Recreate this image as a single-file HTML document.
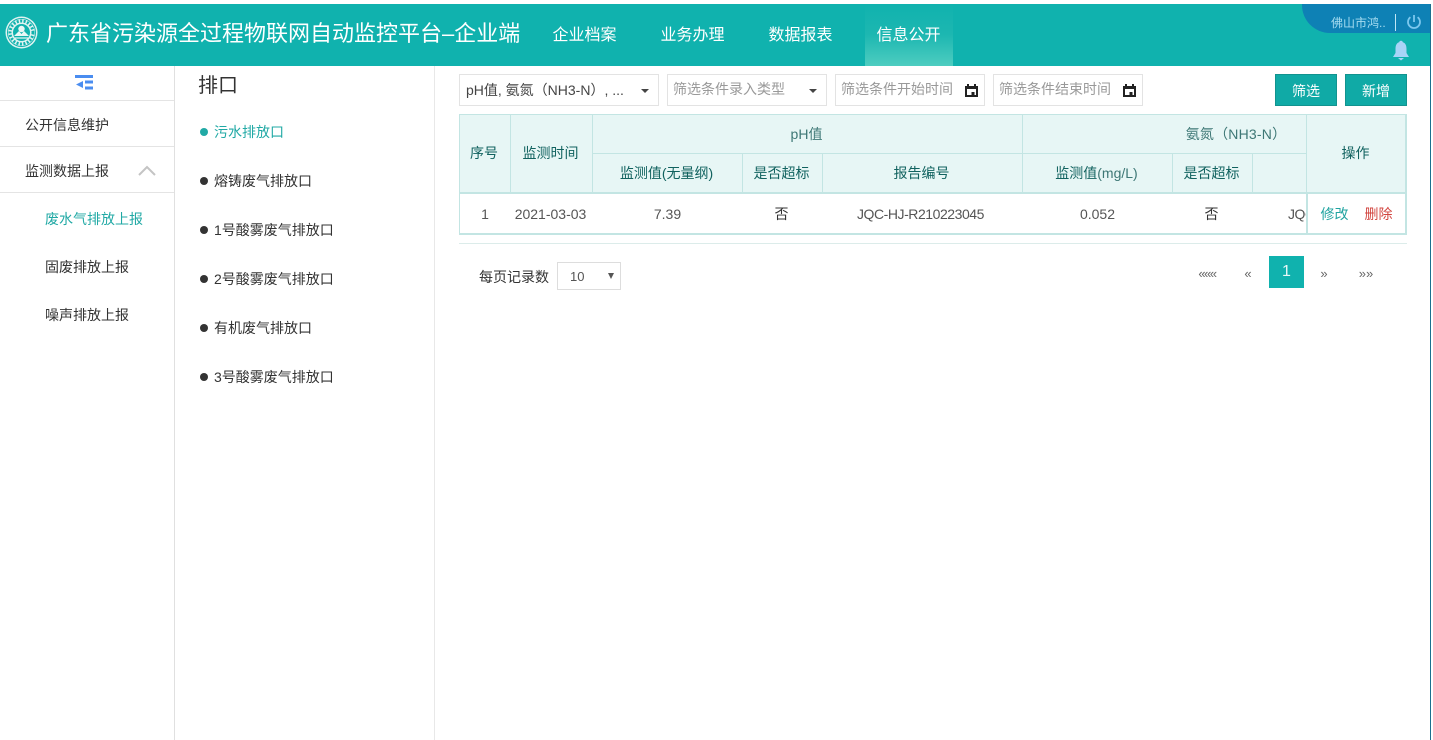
<!DOCTYPE html>
<html lang="zh">
<head>
<meta charset="utf-8">
<style>
html,body{margin:0;padding:0;width:1433px;height:740px;overflow:hidden;background:#fff;}
body{font-family:"Liberation Sans","Noto Sans CJK SC",sans-serif;font-size:14px;color:#333;position:relative;}
.a{position:absolute;white-space:nowrap;}
.hline{position:absolute;height:1px;background:#e4e4e4;}
.nav{position:absolute;top:5px;height:62px;line-height:61px;color:#fff;font-size:16px;text-align:center;}
.box{position:absolute;top:74px;height:30px;border:1px solid #e3e3e3;box-sizing:border-box;line-height:29px;padding-left:5px;font-size:14px;color:#999;white-space:nowrap;overflow:hidden;}
.caret{position:absolute;width:0;height:0;border-left:4px solid transparent;border-right:4px solid transparent;border-top:4px solid #444;top:89px;}
.btn{position:absolute;top:74px;width:62px;height:32px;background:#10aaa6;border:1px solid #12938f;box-sizing:border-box;color:#fff;text-align:center;line-height:32px;font-size:14px;}
.th{position:absolute;color:#11625f;font-size:14px;text-align:center;white-space:nowrap;}
.td{position:absolute;top:194px;height:40px;line-height:40px;color:#555;font-size:14px;text-align:center;white-space:nowrap;}
.v{position:absolute;width:1px;background:#c3e5e3;}
.h{position:absolute;height:1px;background:#c3e5e3;}
.item{position:absolute;left:200px;font-size:14px;color:#333;white-space:nowrap;line-height:20px;}
.item i{display:inline-block;width:8px;height:8px;border-radius:50%;background:#333;margin-right:6px;vertical-align:1px;}
.pg{position:absolute;top:256px;height:32px;line-height:36px;font-size:13px;color:#666;text-align:center;}
</style>
</head>
<body>
<!-- Header -->
<div class="a" style="left:0;top:4px;width:1431px;height:62px;background:#10b2ae;"></div>
<div class="a" style="left:1430px;top:4px;width:1px;height:736px;background:#1b6f8f;"></div>
<svg class="a" style="left:4px;top:15px" width="35" height="35" viewBox="0 0 35 35">
  <circle cx="17.5" cy="17.5" r="16" fill="#dff3f1" />
  <circle cx="17.5" cy="17.5" r="14" fill="none" stroke="#10b2ae" stroke-width="1"/>
  <circle cx="17.5" cy="17.5" r="11.5" fill="none" stroke="#10b2ae" stroke-width="3" stroke-dasharray="2 1.5"/>
  <circle cx="17.5" cy="17.5" r="8.5" fill="#10b2ae"/>
  <circle cx="17.5" cy="14" r="3.2" fill="#e8f7f5"/>
  <path d="M10 21 L15 16 L17.5 19 L20 16 L25 21 Z" fill="#e8f7f5"/>
  <path d="M11 23 H24" stroke="#e8f7f5" stroke-width="1.2"/>
</svg>
<div class="a" style="left:46px;top:4px;line-height:60px;font-size:22px;color:#fff;letter-spacing:0;">广东省污染源全过程物联网自动监控平台–企业端</div>
<div class="a" style="left:865px;top:4px;width:88px;height:62px;background:linear-gradient(to bottom,#10b2ae 0%,#1db7b1 50%,#4ecdc0 100%);"></div>
<div class="nav" style="left:552px;width:65px;">企业档案</div>
<div class="nav" style="left:660px;width:65px;">业务办理</div>
<div class="nav" style="left:768px;width:65px;">数据报表</div>
<div class="nav" style="left:876px;width:65px;">信息公开</div>
<div class="a" style="left:1302px;top:4px;width:128px;height:29px;background:#0e81b5;border-bottom-left-radius:28px;"></div>
<div class="a" style="left:1331px;top:13px;line-height:20px;font-size:12px;color:#a6dcf0;">佛山市鸿..</div>
<div class="a" style="left:1395px;top:14px;width:1px;height:17px;background:#bfe6f5;"></div>
<svg class="a" style="left:1406px;top:14px" width="16" height="16" viewBox="0 0 16 16" fill="none" stroke="#7cc8ee" stroke-width="1.8">
  <path d="M4.4 3.2 A6 6 0 1 0 11.6 3.2"/><path d="M8 1V8"/>
</svg>
<svg class="a" style="left:1392px;top:40px" width="18" height="22" viewBox="0 0 18 22">
  <circle cx="9" cy="2.5" r="1.8" fill="#a9d4f7"/>
  <path d="M9 2 C4.5 2 3.5 5.5 3.5 9 V13 L1 17 H17 L14.5 13 V9 C14.5 5.5 13.5 2 9 2 Z" fill="#a9d4f7"/>
  <path d="M6 18 H12 L9 20.5 Z" fill="#a9d4f7"/>
</svg>

<!-- Left sidebar -->
<div class="a" style="left:174px;top:66px;width:1px;height:674px;background:#e0e0e0;"></div>
<div class="a" style="left:434px;top:66px;width:1px;height:674px;background:#e8e8e8;"></div>
<svg class="a" style="left:75px;top:75px" width="19" height="17" viewBox="0 0 19 17" fill="#4a8df0">
  <rect x="0" y="0" width="18" height="3"/>
  <path d="M1 9.5 L8 6 V13 Z"/>
  <rect x="10" y="5.5" width="8" height="3"/>
  <rect x="10" y="11.5" width="8" height="3"/>
</svg>
<div class="hline" style="left:0;top:100px;width:174px;"></div>
<div class="hline" style="left:0;top:146px;width:174px;"></div>
<div class="hline" style="left:0;top:192px;width:174px;"></div>
<div class="a" style="left:25px;top:115px;line-height:20px;font-size:14px;color:#333;">公开信息维护</div>
<div class="a" style="left:25px;top:161px;line-height:20px;font-size:14px;color:#333;">监测数据上报</div>
<svg class="a" style="left:138px;top:165px" width="18" height="11" viewBox="0 0 18 11" fill="none" stroke="#c4c4c4" stroke-width="2"><path d="M1 10 L9 2 L17 10"/></svg>
<div class="a" style="left:45px;top:209px;line-height:20px;font-size:14px;color:#21a9a5;">废水气排放上报</div>
<div class="a" style="left:45px;top:257px;line-height:20px;font-size:14px;color:#333;">固废排放上报</div>
<div class="a" style="left:45px;top:305px;line-height:20px;font-size:14px;color:#333;">噪声排放上报</div>

<!-- Middle column -->
<div class="a" style="left:198px;top:72px;line-height:28px;font-size:20px;color:#333;">排口</div>
<div class="item" style="top:122px;color:#21a9a5;"><i style="background:#21a9a5"></i>污水排放口</div>
<div class="item" style="top:171px;"><i></i>熔铸废气排放口</div>
<div class="item" style="top:220px;"><i></i>1号酸雾废气排放口</div>
<div class="item" style="top:269px;"><i></i>2号酸雾废气排放口</div>
<div class="item" style="top:318px;"><i></i>有机废气排放口</div>
<div class="item" style="top:367px;"><i></i>3号酸雾废气排放口</div>

<!-- Filters -->
<div class="box" style="left:459px;width:200px;height:32px;line-height:31px;color:#444;padding-left:6px;">pH值, 氨氮（NH3-N）, ...</div>
<div class="caret" style="left:641px;"></div>
<div class="box" style="left:667px;width:160px;height:32px;line-height:29px;">筛选条件录入类型</div>
<div class="caret" style="left:809px;"></div>
<div class="box" style="left:835px;width:150px;height:32px;line-height:29px;">筛选条件开始时间</div>
<svg class="a" style="left:965px;top:84px" width="13" height="13" viewBox="0 0 13 13"><path d="M0 2H13V13H0Z M2 5V11H11V5Z" fill="#222" fill-rule="evenodd"/><rect x="2" y="0" width="2" height="3" fill="#222"/><rect x="9" y="0" width="2" height="3" fill="#222"/><rect x="6.5" y="8" width="3" height="3" fill="#222"/></svg>
<div class="box" style="left:993px;width:150px;height:32px;line-height:29px;">筛选条件结束时间</div>
<svg class="a" style="left:1123px;top:84px" width="13" height="13" viewBox="0 0 13 13"><path d="M0 2H13V13H0Z M2 5V11H11V5Z" fill="#222" fill-rule="evenodd"/><rect x="2" y="0" width="2" height="3" fill="#222"/><rect x="9" y="0" width="2" height="3" fill="#222"/><rect x="6.5" y="8" width="3" height="3" fill="#222"/></svg>
<div class="btn" style="left:1275px;">筛选</div>
<div class="btn" style="left:1345px;">新增</div>

<!-- Table -->
<div class="a" style="left:459px;top:114px;width:948px;height:79px;background:#e7f6f5;"></div>
<div class="h" style="left:459px;top:114px;width:948px;"></div>
<div class="h" style="left:592px;top:153px;width:714px;"></div>
<div class="h" style="left:459px;top:192px;width:948px;height:2px;"></div>
<div class="h" style="left:459px;top:233px;width:948px;height:2px;"></div>
<div class="v" style="left:459px;top:114px;height:120px;"></div>
<div class="v" style="left:510px;top:114px;height:79px;"></div>
<div class="v" style="left:592px;top:114px;height:79px;"></div>
<div class="v" style="left:742px;top:153px;height:40px;"></div>
<div class="v" style="left:822px;top:153px;height:40px;"></div>
<div class="v" style="left:1022px;top:114px;height:79px;"></div>
<div class="v" style="left:1172px;top:153px;height:40px;"></div>
<div class="v" style="left:1252px;top:153px;height:40px;"></div>
<div class="v" style="left:1306px;top:114px;height:79px;"></div>
<div class="v" style="left:1306px;top:193px;height:41px;width:2px;"></div>
<div class="v" style="left:1405px;top:114px;height:120px;width:2px;"></div>

<div class="th" style="left:459px;width:50px;top:143px;line-height:20px;">序号</div>
<div class="th" style="left:510px;width:81px;top:143px;line-height:20px;">监测时间</div>
<div class="th" style="left:592px;width:429px;top:124px;line-height:20px;color:#3d7775;">pH值</div>
<div class="th" style="left:1023px;width:283px;top:124px;line-height:20px;padding-left:143px;box-sizing:border-box;color:#3d7775;letter-spacing:.2px;">氨氮（NH3-N）</div>
<div class="th" style="left:1307px;width:97px;top:143px;line-height:20px;">操作</div>
<div class="th" style="left:592px;width:149px;top:163px;line-height:20px;">监测值(无量纲)</div>
<div class="th" style="left:742px;width:79px;top:163px;line-height:20px;">是否超标</div>
<div class="th" style="left:822px;width:199px;top:163px;line-height:20px;">报告编号</div>
<div class="th" style="left:1022px;width:149px;top:163px;line-height:20px;">监测值<span style="color:#3d7775">(mg/L)</span></div>
<div class="th" style="left:1172px;width:79px;top:163px;line-height:20px;">是否超标</div>

<div class="td" style="left:460px;width:50px;">1</div>
<div class="td" style="left:510px;width:81px;">2021-03-03</div>
<div class="td" style="left:593px;width:149px;">7.39</div>
<div class="td" style="left:742px;width:79px;color:#333;">否</div>
<div class="td" style="left:821px;width:199px;letter-spacing:-.45px;">JQC-HJ-R210223045</div>
<div class="td" style="left:1023px;width:149px;">0.052</div>
<div class="td" style="left:1172px;width:79px;color:#333;">否</div>
<div class="td" style="left:1288px;width:18px;overflow:hidden;text-align:left;letter-spacing:-.45px;">JQC</div>
<div class="td" style="left:1320px;width:29px;color:#1fa3a0;">修改</div>
<div class="td" style="left:1364px;width:29px;color:#d2453f;">删除</div>

<div class="h" style="left:459px;top:243px;width:948px;background:#dcecea;"></div>

<!-- Pagination -->
<div class="a" style="left:479px;top:267px;line-height:20px;font-size:14px;color:#333;">每页记录数</div>
<div class="a" style="left:557px;top:262px;width:64px;height:28px;border:1px solid #ddd;box-sizing:border-box;line-height:27px;padding-left:12px;font-size:13px;color:#555;">10</div>
<div class="a" style="left:608px;top:273px;width:0;height:0;border-left:3px solid transparent;border-right:3px solid transparent;border-top:6px solid #555;"></div>
<div class="pg" style="left:1191px;width:32px;letter-spacing:-1.5px;">«««</div>
<div class="pg" style="left:1232px;width:32px;">«</div>
<div class="a" style="left:1269px;top:256px;width:35px;height:32px;background:#10b2ae;color:#e8f8f7;text-align:center;line-height:32px;font-size:16px;">1</div>
<div class="pg" style="left:1308px;width:32px;">»</div>
<div class="pg" style="left:1350px;width:32px;">»»</div>
</body>
</html>
